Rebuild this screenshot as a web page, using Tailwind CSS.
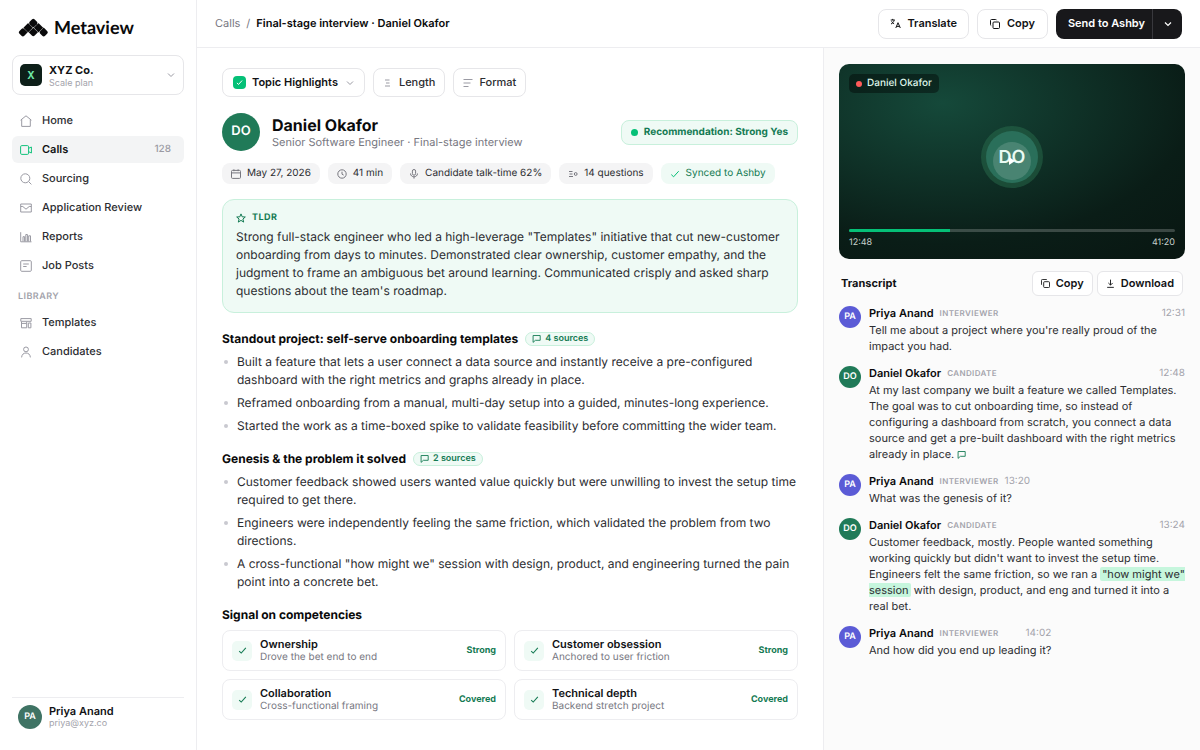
<!DOCTYPE html>
<html lang="en">
<head>
    <meta charset="UTF-8" />
    <meta name="viewport" content="width=device-width, initial-scale=1.0" />
    <title>Metaview - Final-stage interview</title>
    <script src="https://cdn.jsdelivr.net/npm/@tailwindcss/browser@4"></script>
</head>

<body class="bg-white font-['Inter',sans-serif] text-[12px] text-[#2c2d31] antialiased [text-rendering:geometricPrecision]">
    <!-- Icon sprite -->
    <svg class="hidden" xmlns="http://www.w3.org/2000/svg">
        <symbol id="i-home" viewBox="0 0 12 12"><path d="M.6 5.200 6 .8l5.400 4.400M1.700 4.500v6.900h8.600V4.500" /></symbol>
        <symbol id="i-video" viewBox="0 0 12 12"><rect x=".6" y="1.600" width="8" height="8.800" rx="1.200" /><path d="M8.600 4.300 11.400 3v6L8.600 7.700" /></symbol>
        <symbol id="i-search" viewBox="0 0 12 12"><circle cx="5.300" cy="5.300" r="4.500" /><path d="m8.700 8.700 2.700 2.700" /></symbol>
        <symbol id="i-inbox" viewBox="0 0 12 12"><path d="M.7 2h10.600v8H.7zM.8 4.500h2l3.200 2.700 3.200-2.700h2" /></symbol>
        <symbol id="i-chart" viewBox="0 0 12 12"><path d="M.7 1.200v9.600h10.800M3 10.500V5.700h1.600v4.800M5.800 10.500V3.500h1.600v7M8.700 10.500V4.800h1.800v5.700" /></symbol>
        <symbol id="i-post" viewBox="0 0 12 12"><rect x=".7" y=".7" width="10.600" height="10.600" rx="1" /><path d="M3.200 4h5.600M3.200 6.500h3.400" /></symbol>
        <symbol id="i-template" viewBox="0 0 12 12"><path d="M.8 1.600h10.400v2.700H.8zM1.500 4.800v6h5.200v-6M1.500 6.400h5M8.300 6h2.600v4.800H8.300z" /></symbol>
        <symbol id="i-user" viewBox="0 0 12 12"><circle cx="6" cy="3.400" r="2.400" /><path d="M1.600 11.400c.3-3 2-4.400 4.400-4.400s4.100 1.400 4.400 4.400" /></symbol>
        <symbol id="i-chevron" viewBox="0 0 8 8"><path d="m1 2.500 3 3 3-3" /></symbol>
        <symbol id="i-check" viewBox="0 0 10 10"><path d="m1.300 5.600 2.300 2.200 5.100-5.600" /></symbol>
        <symbol id="i-length" viewBox="0 0 10 10"><path d="M2 2h4.500M3 5h3.500M2 8h5" /></symbol>
        <symbol id="i-format" viewBox="0 0 10 10"><path d="M.5 1.500h9M.5 5h7M.5 8.500h5" /></symbol>
        <symbol id="i-calendar" viewBox="0 0 10 10"><rect x=".5" y="1.400" width="9" height="8" rx="1" /><path d="M.6 3.900h8.800M2.900.3v1.900M7.100.3v1.900" /></symbol>
        <symbol id="i-clock" viewBox="0 0 10 10"><circle cx="5" cy="5" r="4.200" /><path d="M5 2.700V5.200l1.700.9" /></symbol>
        <symbol id="i-mic" viewBox="0 0 10 10"><rect x="3.400" y=".5" width="3.200" height="5.700" rx="1.600" /><path d="M1.500 4.500c0 4.400 7 4.400 7 0M5 7.900v1.700" /></symbol>
        <symbol id="i-questions" viewBox="0 0 10 10"><path d="M1 2.500h3.500M1.500 5h3M1 7.500h4" /><circle cx="7.700" cy="5" r="1.400" /></symbol>
        <symbol id="i-star" viewBox="0 0 10 10"><path d="m5 .9 1.200 2.900 3.100.2-2.400 2 .8 3.100L5 7.400 2.300 9.100l.8-3.100-2.400-2 3.100-.2z" /></symbol>
        <symbol id="i-flag" viewBox="0 0 10 10"><path d="M1.200 9.300V1.700h7.900v5.300H3.800z" /></symbol>
        <symbol id="i-copy" viewBox="0 0 10 10"><rect x="3" y="3" width="6.500" height="6.500" rx="1" /><path d="M1.200 6.600C.7 6.400.5 6 .5 5.600V1.500c0-.6.4-1 1-1h4.100c.5 0 .8.2 1 .7" /></symbol>
        <symbol id="i-download" viewBox="0 0 10 10"><path d="M5 .7v6M2.600 4.400 5 6.800l2.400-2.400M1.300 9.300h7.400" /></symbol>
        <symbol id="i-translate" viewBox="0 0 11 11"><path d="M.7 2h4.100M2.700.9V2M4.200 2.200C3.700 4 2.500 5.300 1 6M1.600 3.300c.6 1.200 1.400 2 2.500 2.500M5.800 10 8 4.700l2.300 5.300M6.600 8.400h2.900" /></symbol>
    </svg>

    <div class="flex min-h-screen">
        <!-- Sidebar -->
        <aside class="flex w-[197px] shrink-0 flex-col border-r border-[#ededf0] px-3 pt-[18px] pb-[21px]">
            <a href="#" class="flex items-center gap-[5px] pl-[6px] text-[#0a0a0b]">
                <svg class="h-[19px] w-[31px]" viewBox="0 0 31 19" fill="currentColor">
                    <g transform="rotate(45 15.300 5)"><rect x="11.900" y="1.600" width="6.800" height="6.800" rx="1.600" /></g>
                    <g transform="rotate(45 10.100 9.700)"><rect x="6.800" y="6.400" width="6.600" height="6.600" rx=".3" /></g>
                    <g transform="rotate(45 20.500 9.700)"><rect x="17.200" y="6.400" width="6.600" height="6.600" rx=".3" /></g>
                    <g transform="rotate(45 4.900 14.300)"><path d="M1.500 12.900q0-2 2-2h4.800v4.800q0 2-2 2h-2.800q-2 0-2-2z" /></g>
                    <g transform="rotate(45 15.300 14.300)"><path d="M12 11h6.600v4.600q0 2-2 2H12z" /></g>
                    <g transform="rotate(45 25.700 14.300)"><path d="M22.300 10.900h4.800q2 0 2 2v2.800q0 2-2 2h-2.800q-2 0-2-2z" /></g>
                </svg>
                <span class="font-['Lato',sans-serif] text-[18px] leading-[19px] font-bold">Metaview</span>
            </a>

            <button class="mt-[18px] flex h-10 items-center rounded-lg border border-[#e6e6e9] px-[7px] text-left">
                <span class="flex size-[22px] items-center justify-center rounded-[5px] bg-[#0d1f19] text-[10px] font-bold text-[#6ee7a8]">X</span>
                <span class="ml-[7px] flex-1">
                    <span class="block text-[11px] leading-[14px] font-bold text-[#111214]">XYZ Co.</span>
                    <span class="block text-[9px] leading-[11px] text-[#a3a3ab]">Scale plan</span>
                </span>
                <svg class="mr-[1px] size-2 fill-none stroke-[#9a9aa3]"><use href="#i-chevron" /></svg>
            </button>

            <nav class="mt-3 flex flex-col gap-[2px] text-[11px] font-medium">
                <a href="#" class="flex h-[27px] items-center gap-[10px] rounded-md px-2"><svg class="size-3 fill-none stroke-[#9a9aa3]"><use href="#i-home" /></svg>Home</a>
                <a href="#" class="flex h-[27px] items-center gap-[10px] rounded-md bg-[#f3f4f5] px-2 font-semibold text-[#111214]">
                    <svg class="size-3 fill-none stroke-[#12c27c]"><use href="#i-video" /></svg>Calls
                    <span class="ml-auto pr-[5px] text-[10px] font-medium text-[#9a9aa3]">128</span>
                </a>
                <a href="#" class="flex h-[27px] items-center gap-[10px] rounded-md px-2"><svg class="size-3 fill-none stroke-[#9a9aa3]"><use href="#i-search" /></svg>Sourcing</a>
                <a href="#" class="flex h-[27px] items-center gap-[10px] rounded-md px-2"><svg class="size-3 fill-none stroke-[#9a9aa3]"><use href="#i-inbox" /></svg>Application Review</a>
                <a href="#" class="flex h-[27px] items-center gap-[10px] rounded-md px-2"><svg class="size-3 fill-none stroke-[#9a9aa3]"><use href="#i-chart" /></svg>Reports</a>
                <a href="#" class="flex h-[27px] items-center gap-[10px] rounded-md px-2"><svg class="size-3 fill-none stroke-[#9a9aa3]"><use href="#i-post" /></svg>Job Posts</a>
                <h2 class="mt-[10px] mb-1 pl-[6px] text-[9px] leading-[12px] font-semibold tracking-wider text-[#a3a3ab]">LIBRARY</h2>
                <a href="#" class="flex h-[27px] items-center gap-[10px] rounded-md px-2"><svg class="size-3 fill-none stroke-[#9a9aa3]"><use href="#i-template" /></svg>Templates</a>
                <a href="#" class="flex h-[27px] items-center gap-[10px] rounded-md px-2"><svg class="size-3 fill-none stroke-[#9a9aa3]"><use href="#i-user" /></svg>Candidates</a>
            </nav>

            <div class="mt-auto flex items-center gap-[7px] border-t border-[#ededf0] pt-[7px] pl-[6px]">
                <span class="flex size-6 items-center justify-center rounded-full bg-[#3f7364] text-[9px] font-semibold text-white">PA</span>
                <div>
                    <p class="text-[11px] leading-[13px] font-semibold text-[#111214]">Priya Anand</p>
                    <p class="text-[9px] leading-[11px] text-[#a3a3ab]">priya@xyz.co</p>
                </div>
            </div>
        </aside>

        <div class="flex min-w-0 flex-1 flex-col">
            <!-- Top bar -->
            <header class="flex h-12 items-center border-b border-[#ededf0] px-[18px]">
                <div class="flex gap-[6px] text-[11px] text-[#77777f]">
                    <a href="#">Calls</a><span>/</span>
                    <span class="font-semibold text-[#0a0a0b]">Final-stage interview · Daniel Okafor</span>
                </div>
                <div class="ml-auto flex gap-2 text-[11px] font-semibold text-[#111214]">
                    <button class="flex h-[30px] items-center gap-[6px] rounded-lg border border-[#e6e6e9] px-[11px]"><svg class="size-[11px] fill-none stroke-current"><use href="#i-translate" /></svg>Translate</button>
                    <button class="flex h-[30px] items-center gap-[7px] rounded-lg border border-[#e6e6e9] px-3"><svg class="size-[10px] fill-none stroke-current"><use href="#i-copy" /></svg>Copy</button>
                    <div class="flex h-[30px] rounded-lg bg-[#18181b] text-white">
                        <button class="pr-[7px] pl-3">Send to Ashby</button>
                        <button class="flex w-[30px] items-center justify-center border-l border-[#38383d]" aria-label="More send options"><svg class="size-2 fill-none stroke-current stroke-[1.2]"><use href="#i-chevron" /></svg></button>
                    </div>
                </div>
            </header>

            <div class="flex flex-1">
                <!-- Notes -->
                <main class="min-w-0 flex-1 px-[25px] pt-5">
                    <div class="flex gap-2 text-[11px] font-medium">
                        <button class="flex h-[29px] items-center rounded-lg border border-[#e6e6e9] px-[10px] font-semibold text-[#111214]">
                            <span class="mr-[6px] flex size-[13px] items-center justify-center rounded-[4px] bg-[#05c077]"><svg class="size-[7px] fill-none stroke-white stroke-[1.4]"><use href="#i-check" /></svg></span>
                            Topic Highlights
                            <svg class="ml-2 size-2 fill-none stroke-[#9a9aa3]"><use href="#i-chevron" /></svg>
                        </button>
                        <button class="flex h-[29px] items-center gap-[6px] rounded-lg border border-[#e6e6e9] px-[9px]"><svg class="size-[10px] fill-none stroke-[#9a9aa3]"><use href="#i-length" /></svg>Length</button>
                        <button class="flex h-[29px] items-center gap-[6px] rounded-lg border border-[#e6e6e9] px-[9px]"><svg class="size-[10px] fill-none stroke-[#9a9aa3]"><use href="#i-format" /></svg>Format</button>
                    </div>

                    <div class="mt-4 flex items-center gap-3">
                        <span class="flex size-[38px] items-center justify-center rounded-full bg-[#207a58] text-[13px] font-semibold text-white">DO</span>
                        <div>
                            <h1 class="text-[16px] leading-[20px] font-bold text-[#0a0a0b]">Daniel Okafor</h1>
                            <p class="text-[11px] leading-[15px] text-[#77777f]">Senior Software Engineer · Final-stage interview</p>
                        </div>
                        <span class="ml-auto flex h-[25px] items-center gap-[6px] rounded-lg border border-[#c8f0dc] bg-[#effaf5] px-[9px] text-[10px] font-bold text-[#147a53]"><span class="size-[7px] rounded-full bg-[#05c077]"></span>Recommendation: Strong Yes</span>
                    </div>

                    <div class="mt-3 flex gap-2 text-[10px]">
                        <span class="flex h-[21px] items-center gap-[6px] rounded-lg bg-[#f4f4f5] px-[9px]"><svg class="size-[10px] fill-none stroke-[#77777f]"><use href="#i-calendar" /></svg>May 27, 2026</span>
                        <span class="flex h-[21px] items-center gap-[6px] rounded-lg bg-[#f4f4f5] px-[9px]"><svg class="size-[10px] fill-none stroke-[#77777f]"><use href="#i-clock" /></svg>41 min</span>
                        <span class="flex h-[21px] items-center gap-[6px] rounded-lg bg-[#f4f4f5] px-[9px]"><svg class="size-[10px] fill-none stroke-[#77777f]"><use href="#i-mic" /></svg>Candidate talk-time 62%</span>
                        <span class="flex h-[21px] items-center gap-[6px] rounded-lg bg-[#f4f4f5] px-[9px]"><svg class="size-[10px] fill-none stroke-[#77777f]"><use href="#i-questions" /></svg>14 questions</span>
                        <span class="flex h-[21px] items-center gap-[6px] rounded-lg bg-[#effaf5] px-[9px] text-[#147a53]"><svg class="size-[10px] fill-none stroke-[#05c077]"><use href="#i-check" /></svg>Synced to Ashby</span>
                    </div>

                    <section class="mt-[15px] rounded-xl border border-[#c8f0dc] bg-[#effaf5] px-[13px] pt-[11px] pb-3">
                        <h2 class="flex items-center gap-[6px] text-[9px] leading-[13px] font-bold tracking-wider text-[#147a53]"><svg class="size-[10px] fill-none stroke-current"><use href="#i-star" /></svg>TLDR</h2>
                        <p class="mt-1 text-[12px] leading-[18px]">Strong full-stack engineer who led a high-leverage "Templates" initiative that cut new-customer onboarding from days to minutes. Demonstrated clear ownership, customer empathy, and the judgment to frame an ambiguous bet around learning. Communicated crisply and asked sharp questions about the team's roadmap.</p>
                    </section>

                    <section class="mt-[17px]">
                        <h2 class="flex items-center gap-[7px] text-[12px] leading-[17px] font-bold text-[#0a0a0b]">Standout project: self-serve onboarding templates
                            <a href="#" class="flex h-[14px] items-center gap-1 rounded-full border border-[#c8f0dc] bg-[#effaf5] px-[6px] text-[9px] font-semibold text-[#147a53]"><svg class="size-[9px] fill-none stroke-current"><use href="#i-flag" /></svg>4 sources</a>
                        </h2>
                        <ul class="mt-[6px] list-none space-y-[5px] text-[12px] leading-[18px]">
                            <li class="flex"><span class="mt-[7px] mr-[9px] ml-[2px] size-1 shrink-0 rounded-full bg-[#c9c9d0]"></span><span>Built a feature that lets a user connect a data source and instantly receive a pre-configured dashboard with the right metrics and graphs already in place.</span></li>
                            <li class="flex"><span class="mt-[7px] mr-[9px] ml-[2px] size-1 shrink-0 rounded-full bg-[#c9c9d0]"></span><span>Reframed onboarding from a manual, multi-day setup into a guided, minutes-long experience.</span></li>
                            <li class="flex"><span class="mt-[7px] mr-[9px] ml-[2px] size-1 shrink-0 rounded-full bg-[#c9c9d0]"></span><span>Started the work as a time-boxed spike to validate feasibility before committing the wider team.</span></li>
                        </ul>
                    </section>

                    <section class="mt-[15px]">
                        <h2 class="flex items-center gap-[7px] text-[12px] leading-[17px] font-bold text-[#0a0a0b]">Genesis &amp; the problem it solved
                            <a href="#" class="flex h-[14px] items-center gap-1 rounded-full border border-[#c8f0dc] bg-[#effaf5] px-[6px] text-[9px] font-semibold text-[#147a53]"><svg class="size-[9px] fill-none stroke-current"><use href="#i-flag" /></svg>2 sources</a>
                        </h2>
                        <ul class="mt-[6px] list-none space-y-[5px] text-[12px] leading-[18px]">
                            <li class="flex"><span class="mt-[7px] mr-[9px] ml-[2px] size-1 shrink-0 rounded-full bg-[#c9c9d0]"></span><span>Customer feedback showed users wanted value quickly but were unwilling to invest the setup time required to get there.</span></li>
                            <li class="flex"><span class="mt-[7px] mr-[9px] ml-[2px] size-1 shrink-0 rounded-full bg-[#c9c9d0]"></span><span>Engineers were independently feeling the same friction, which validated the problem from two directions.</span></li>
                            <li class="flex"><span class="mt-[7px] mr-[9px] ml-[2px] size-1 shrink-0 rounded-full bg-[#c9c9d0]"></span><span>A cross-functional "how might we" session with design, product, and engineering turned the pain point into a concrete bet.</span></li>
                        </ul>
                    </section>

                    <section class="mt-[15px]">
                        <h2 class="text-[12px] leading-[17px] font-bold text-[#0a0a0b]">Signal on competencies</h2>
                        <div class="mt-[7px] grid grid-cols-2 gap-2">
                            <div class="flex h-[41px] items-center gap-2 rounded-lg border border-[#ededf0] px-[9px]">
                                <span class="flex size-5 items-center justify-center rounded-[5px] bg-[#effaf5] text-[#147a53]"><svg class="size-[9px] fill-none stroke-current stroke-[1.2]"><use href="#i-check" /></svg></span>
                                <div class="flex-1"><h3 class="text-[11px] leading-[13px] font-semibold text-[#111214]">Ownership</h3><p class="text-[10px] leading-[12px] text-[#77777f]">Drove the bet end to end</p></div>
                                <span class="text-[9px] font-bold text-[#147a53]">Strong</span>
                            </div>
                            <div class="flex h-[41px] items-center gap-2 rounded-lg border border-[#ededf0] px-[9px]">
                                <span class="flex size-5 items-center justify-center rounded-[5px] bg-[#effaf5] text-[#147a53]"><svg class="size-[9px] fill-none stroke-current stroke-[1.2]"><use href="#i-check" /></svg></span>
                                <div class="flex-1"><h3 class="text-[11px] leading-[13px] font-semibold text-[#111214]">Customer obsession</h3><p class="text-[10px] leading-[12px] text-[#77777f]">Anchored to user friction</p></div>
                                <span class="text-[9px] font-bold text-[#147a53]">Strong</span>
                            </div>
                            <div class="flex h-[41px] items-center gap-2 rounded-lg border border-[#ededf0] px-[9px]">
                                <span class="flex size-5 items-center justify-center rounded-[5px] bg-[#effaf5] text-[#147a53]"><svg class="size-[9px] fill-none stroke-current stroke-[1.2]"><use href="#i-check" /></svg></span>
                                <div class="flex-1"><h3 class="text-[11px] leading-[13px] font-semibold text-[#111214]">Collaboration</h3><p class="text-[10px] leading-[12px] text-[#77777f]">Cross-functional framing</p></div>
                                <span class="text-[9px] font-bold text-[#147a53]">Covered</span>
                            </div>
                            <div class="flex h-[41px] items-center gap-2 rounded-lg border border-[#ededf0] px-[9px]">
                                <span class="flex size-5 items-center justify-center rounded-[5px] bg-[#effaf5] text-[#147a53]"><svg class="size-[9px] fill-none stroke-current stroke-[1.2]"><use href="#i-check" /></svg></span>
                                <div class="flex-1"><h3 class="text-[11px] leading-[13px] font-semibold text-[#111214]">Technical depth</h3><p class="text-[10px] leading-[12px] text-[#77777f]">Backend stretch project</p></div>
                                <span class="text-[9px] font-bold text-[#147a53]">Covered</span>
                            </div>
                        </div>
                    </section>
                </main>

                <!-- Recording and transcript -->
                <aside class="w-[377px] shrink-0 border-l border-[#ededf0] bg-[#fbfbfb] px-[15px] pt-4">
                    <div class="relative flex aspect-video flex-col justify-between rounded-[10px] bg-[radial-gradient(120%_120%_at_30%_20%,#15493a_0%,#0a1d17_60%,#08130f_100%)] p-[10px]">
                        <span class="flex h-[19px] items-center gap-[5px] self-start rounded-[5px] bg-black/40 px-[7px] text-[10px] font-medium text-[#dff5ea]"><span class="size-[6px] rounded-full bg-[#ff5a5a]"></span>Daniel Okafor</span>
                        <div>
                            <div class="h-[3px] overflow-hidden rounded-full bg-white/20"><div class="h-full w-[31%] bg-[#05c077]"></div></div>
                            <div class="mt-[5px] flex justify-between text-[9px] leading-[12px] text-[#c5cfca]"><span>12:48</span><span>41:20</span></div>
                        </div>
                        <span class="absolute top-[67px] left-1/2 flex size-[52px] -translate-x-1/2 items-center justify-center rounded-full bg-[#2a6f5a] text-[18px] font-semibold text-[#e6fbf1] ring-5 ring-[#2f7a55]/40">DO</span>
                        <button class="absolute top-1/2 left-1/2 flex size-[38px] -translate-1/2 items-center justify-center rounded-full bg-white/15" aria-label="Play"><svg class="size-2 fill-white" viewBox="0 0 8 8"><path d="M1 0v8l6-4z" /></svg></button>
                    </div>

                    <div class="mt-3 flex items-center px-[2px] text-[11px] font-semibold text-[#111214]">
                        <h2 class="font-bold">Transcript</h2>
                        <button class="ml-auto flex h-[25px] items-center gap-[6px] rounded-md border border-[#e6e6e9] bg-white px-2"><svg class="size-[9px] fill-none stroke-current"><use href="#i-copy" /></svg>Copy</button>
                        <button class="ml-1 flex h-[25px] items-center gap-[6px] rounded-md border border-[#e6e6e9] bg-white px-2"><svg class="size-[9px] fill-none stroke-current"><use href="#i-download" /></svg>Download</button>
                    </div>

                    <div class="mt-[10px] space-y-[12px] text-[11px] leading-[16px]">
                        <article class="flex gap-2">
                            <span class="flex size-[22px] shrink-0 items-center justify-center rounded-full bg-[#5b5bd6] text-[9px] font-semibold text-white">PA</span>
                            <div>
                                <div class="flex h-[15px] items-center gap-[6px]"><h3 class="font-semibold text-[#0a0a0b]">Priya Anand</h3><span class="text-[8px] font-semibold tracking-wider text-[#a3a3ab]">INTERVIEWER</span><time class="ml-auto text-[10px] text-[#a3a3ab]">12:31</time></div>
                                <p class="mt-px">Tell me about a project where you're really proud of the impact you had.</p>
                            </div>
                        </article>
                        <article class="flex gap-2">
                            <span class="flex size-[22px] shrink-0 items-center justify-center rounded-full bg-[#207a58] text-[9px] font-semibold text-white">DO</span>
                            <div>
                                <div class="flex h-[15px] items-center gap-[6px]"><h3 class="font-semibold text-[#0a0a0b]">Daniel Okafor</h3><span class="text-[8px] font-semibold tracking-wider text-[#a3a3ab]">CANDIDATE</span><time class="ml-auto text-[10px] text-[#a3a3ab]">12:48</time></div>
                                <p class="mt-px">At my last company we built a feature we called Templates. The goal was to cut onboarding time, so instead of configuring a dashboard from scratch, you connect a data source and get a pre-built dashboard with the right metrics already in place. <svg class="inline size-[9px] fill-none stroke-[#147a53]"><use href="#i-flag" /></svg></p>
                            </div>
                        </article>
                        <article class="flex gap-2">
                            <span class="flex size-[22px] shrink-0 items-center justify-center rounded-full bg-[#5b5bd6] text-[9px] font-semibold text-white">PA</span>
                            <div>
                                <div class="flex h-[15px] items-center gap-[6px]"><h3 class="font-semibold text-[#0a0a0b]">Priya Anand</h3><span class="text-[8px] font-semibold tracking-wider text-[#a3a3ab]">INTERVIEWER</span><time class="ml-auto text-[10px] text-[#a3a3ab]">13:20</time></div>
                                <p class="mt-px">What was the genesis of it?</p>
                            </div>
                        </article>
                        <article class="flex gap-2">
                            <span class="flex size-[22px] shrink-0 items-center justify-center rounded-full bg-[#207a58] text-[9px] font-semibold text-white">DO</span>
                            <div>
                                <div class="flex h-[15px] items-center gap-[6px]"><h3 class="font-semibold text-[#0a0a0b]">Daniel Okafor</h3><span class="text-[8px] font-semibold tracking-wider text-[#a3a3ab]">CANDIDATE</span><time class="ml-auto text-[10px] text-[#a3a3ab]">13:24</time></div>
                                <p class="mt-px">Customer feedback, mostly. People wanted something working quickly but didn't want to invest the setup time. Engineers felt the same friction, so we ran a <mark class="rounded-[2px] bg-[#c6f6dd] px-[2px] text-inherit">"how might we" session</mark> with design, product, and eng and turned it into a real bet.</p>
                            </div>
                        </article>
                        <article class="flex gap-2">
                            <span class="flex size-[22px] shrink-0 items-center justify-center rounded-full bg-[#5b5bd6] text-[9px] font-semibold text-white">PA</span>
                            <div>
                                <div class="flex h-[15px] items-center gap-[6px]"><h3 class="font-semibold text-[#0a0a0b]">Priya Anand</h3><span class="text-[8px] font-semibold tracking-wider text-[#a3a3ab]">INTERVIEWER</span><time class="ml-auto text-[10px] text-[#a3a3ab]">14:02</time></div>
                                <p class="mt-px">And how did you end up leading it?</p>
                            </div>
                        </article>
                    </div>
                </aside>
            </div>
        </div>
    </div>
</body>
</html>
